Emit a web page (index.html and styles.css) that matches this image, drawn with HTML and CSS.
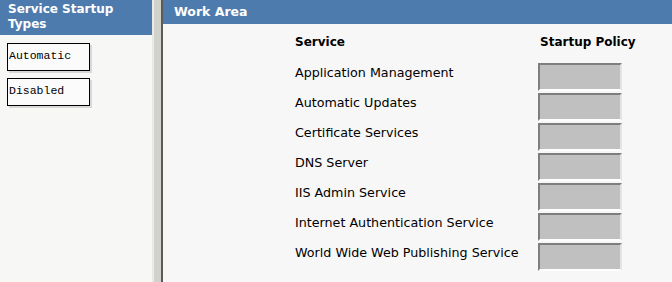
FILE: index.html
```html
<!DOCTYPE html>
<html lang="en">
<head>
    <meta charset="UTF-8">
    <title>Service Startup Types</title>
    <link rel="stylesheet" href="styles.css">
</head>
<body>
    <div class="frame">
        <div class="side-pane">
            <div class="pane-title side-title">Service Startup Types</div>
            <div class="type-list">
                <div class="type-item">Automatic</div>
                <div class="type-item">Disabled</div>
            </div>
        </div>

        <div class="splitter"></div>

        <div class="work-pane">
            <div class="pane-title work-title">Work Area</div>
            <div class="service-table">
                <div class="col-head">Service</div>
                <div class="col-head policy-head">Startup Policy</div>

                <div class="service-name">Application Management</div>
                <div class="policy-slot"></div>
                <div class="service-name">Automatic Updates</div>
                <div class="policy-slot"></div>
                <div class="service-name">Certificate Services</div>
                <div class="policy-slot"></div>
                <div class="service-name">DNS Server</div>
                <div class="policy-slot"></div>
                <div class="service-name">IIS Admin Service</div>
                <div class="policy-slot"></div>
                <div class="service-name">Internet Authentication Service</div>
                <div class="policy-slot"></div>
                <div class="service-name">World Wide Web Publishing Service</div>
                <div class="policy-slot"></div>
            </div>
        </div>
    </div>
</body>
</html>
```

FILE: styles.css
```css
body {
    margin: 0;
    font-family: Tahoma, "DejaVu Sans", sans-serif;
    color: #000;
    background: #f7f7f7;
}
.frame {
    display: flex;
    height: 282px;
    overflow: hidden;
}
.pane-title {
    background: #4d7bad;
    color: #fff;
    font-family: "DejaVu Sans", Verdana, sans-serif;
    font-weight: bold;
    font-size: 12px;
    white-space: nowrap;
}
.side-pane {
    width: 153px;
    background: #f7f7f5;
    border-right: 1px solid #e6e6e2;
    box-sizing: border-box;
}
.side-title {
    height: 35px;
    padding: 2px 0 0 8px;
    line-height: 15px;
    white-space: normal;
    box-sizing: border-box;
}
.type-list {
    display: flex;
    flex-direction: column;
    gap: 7px;
    padding: 8px 0 0 7px;
}
.type-item {
    width: 83px;
    height: 28px;
    box-sizing: border-box;
    border: 1px solid #000;
    background: #fbfbfb;
    box-shadow: 2px 2px 0 #d8d8d8;
    font-family: "Liberation Mono", monospace;
    font-size: 11.5px;
    line-height: 24px;
    padding-left: 1px;
}
.splitter {
    width: 7px;
    background: #d2d2cc;
    border-left: 1px solid #eeeeea;
    border-right: 2px solid #5a5a58;
}
.work-pane {
    flex: 1;
    background: #f7f7f7;
}
.work-title {
    height: 24px;
    padding-left: 11px;
    line-height: 24px;
    font-size: 12.5px;
}
.service-table {
    display: grid;
    grid-template-columns: 243px 84px;
    grid-auto-rows: 30px;
    margin-left: 132px;
    padding-top: 9px;
    font-size: 12.7px;
}
.col-head {
    font-family: "DejaVu Sans", Verdana, sans-serif;
    font-weight: bold;
    font-size: 12px;
    line-height: 18px;
    white-space: nowrap;
}
.policy-head {
    padding-left: 2px;
}
.service-name {
    line-height: 16px;
    padding-top: 2px;
    white-space: nowrap;
}
.policy-slot {
    height: 28px;
    box-sizing: border-box;
    background: #c0c0c0;
    border-top: 2px solid #7e7e7e;
    border-left: 2px solid #7e7e7e;
    border-bottom: 2px solid #fff;
    border-right: 2px solid #e4e4e4;
}
```
